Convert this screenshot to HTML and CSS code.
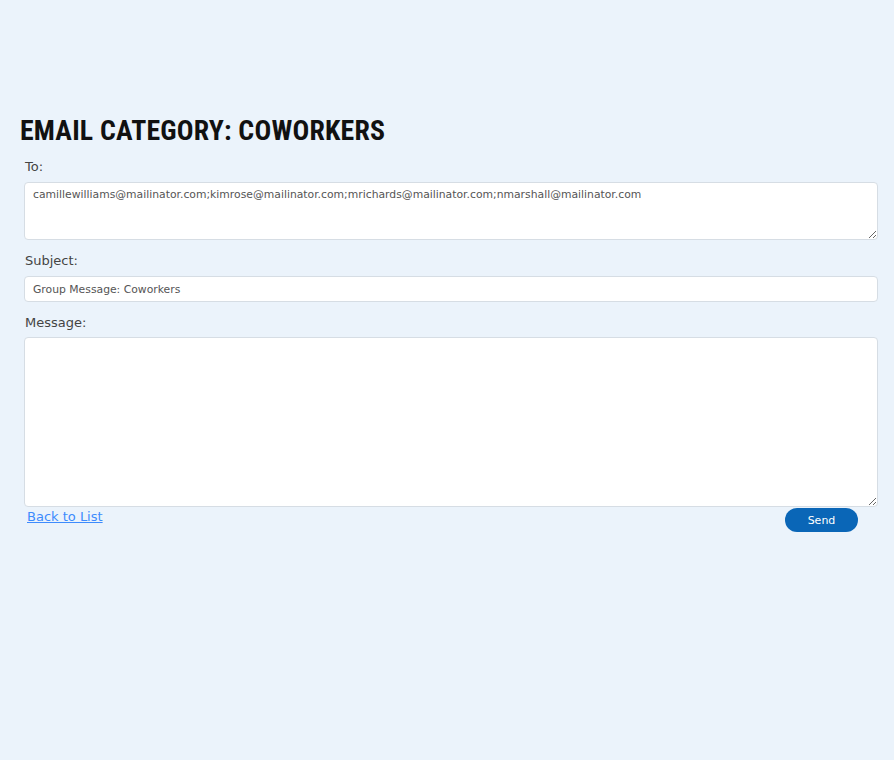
FILE: index.html
```html
<!DOCTYPE html>
<html>
<head>
<meta charset="utf-8">
<link rel="stylesheet" href="styles.css">
</head>
<body>
<div class="page">
  <h1 class="title">EMAIL CATEGORY: COWORKERS</h1>
  <form class="form">
    <label class="label">To:</label>
    <textarea class="field to">camillewilliams@mailinator.com;kimrose@mailinator.com;mrichards@mailinator.com;nmarshall@mailinator.com</textarea>
    <label class="label">Subject:</label>
    <input class="field subject" type="text" value="Group Message: Coworkers">
    <label class="label label-msg">Message:</label>
    <textarea class="field message"></textarea>
    <div class="actions">
      <a class="back" href="#">Back to List</a>
      <button class="send" type="button">Send</button>
    </div>
  </form>
</div>
</body>
</html>
```
FILE: styles.css
```css
html, body {
  margin: 0;
  padding: 0;
  background: #ebf3fb;
}
body {
  font-family: "DejaVu Sans", sans-serif;
  color: #444;
}
.page {
  padding: 113px 16px 0 20px;
}
.title {
  margin: 0 0 10px 0;
  font-family: "Roboto Condensed", "Liberation Sans Narrow", "Roboto", sans-serif;
  font-weight: 700;
  font-size: 27.8px;
  line-height: 36px;
  color: #111;
  letter-spacing: 0.2px;
}
.form {
  display: flex;
  flex-direction: column;
  padding-left: 4px;
}
.label {
  display: block;
  font-size: 13px;
  line-height: 16px;
  color: #444;
  padding-left: 1px;
  margin-bottom: 7px;
}
.label-msg {
  margin-bottom: 6px;
}
.field {
  box-sizing: border-box;
  width: 854px;
  background: #fff;
  border: 1px solid #d6dde4;
  border-radius: 4px;
  font-family: "DejaVu Sans", sans-serif;
  font-size: 10.8px;
  color: #555;
  margin: 0 0 13px 0;
  outline: none;
}
.to {
  height: 58px;
  padding: 5px 8px;
  resize: vertical;
}
.subject {
  height: 26px;
  padding: 0 8px;
  margin-bottom: 13px;
}
.message {
  height: 170px;
  padding: 5px 8px;
  margin-bottom: 1px;
}
.actions {
  display: flex;
  justify-content: space-between;
  align-items: flex-start;
  width: 831px;
  padding-left: 3px;
}
.back {
  font-size: 13px;
  color: #3d8bfd;
  text-decoration: underline;
  line-height: 18px;
}
.send {
  width: 73px;
  height: 24px;
  border: none;
  border-radius: 12px;
  background: #0a66b7;
  color: #fff;
  font-family: "DejaVu Sans", sans-serif;
  font-size: 11px;
  padding: 0;
}
```
